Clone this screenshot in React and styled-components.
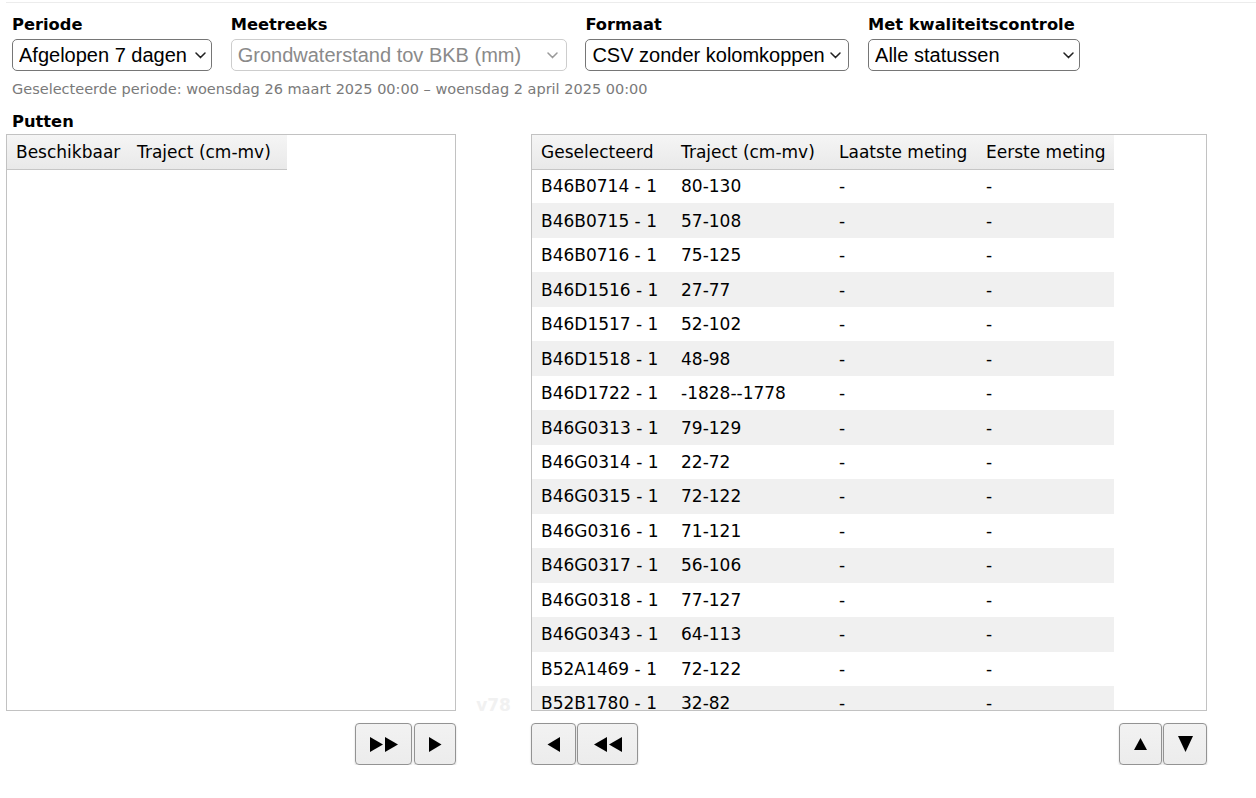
import React from "react";
import styled, { createGlobalStyle } from "styled-components";

const Global = createGlobalStyle`
  html, body { margin: 0; padding: 0; background: #fff; }
  body { font-family: "DejaVu Sans", Verdana, sans-serif; color: #000; }
`;

const Page = styled.div`
  padding: 2px 0 0 6px;
  width: 1208px;
`;

const TopRule = styled.div`
  width: 1250px;
  border-top: 1px solid #ececec;
`;

const Controls = styled.div`
  display: flex;
  gap: 18.7px;
  padding: 12px 0 0 6px;
`;

const Field = styled.div`
  display: flex;
  flex-direction: column;
  gap: 4px;
`;

const Label = styled.label`
  font-family: "DejaVu Sans", Verdana, sans-serif;
  font-weight: bold;
  font-size: 16.3px;
  line-height: 20px;
  white-space: nowrap;
`;

const SelectWrap = styled.div`
  position: relative;
  width: ${(p) => p.$w}px;
  height: 32px;
`;

const Select = styled.select`
  appearance: none;
  -webkit-appearance: none;
  box-sizing: border-box;
  width: 100%;
  height: 32px;
  margin: 0;
  padding: 0 24px 0 6px;
  border: 1px solid ${(p) => (p.disabled ? "#cdcdcd" : "#767676")};
  border-radius: 5px;
  background: #fff;
  color: ${(p) => (p.disabled ? "#8a8a8a" : "#000")};
  font-family: "Liberation Sans", Arial, sans-serif;
  font-size: 20px;
  line-height: 30px;
  opacity: 1;
`;

const Chevron = styled.svg`
  position: absolute;
  right: ${(p) => p.$r}px;
  top: 13px;
  width: 11px;
  height: 7px;
  pointer-events: none;
`;

const Period = styled.div`
  margin: 9px 0 0 6px;
  font-size: 14.5px;
  line-height: 18px;
  color: #7a7a7a;
  white-space: nowrap;
`;

const Section = styled.div`
  margin: 14px 0 2px 6px;
  font-weight: bold;
  font-size: 16.3px;
  line-height: 20px;
`;

const Grid = styled.div`
  display: grid;
  grid-template-columns: 450px 75px 676px;
`;

const Box = styled.div`
  box-sizing: border-box;
  height: 577px;
  border: 1px solid #c2c2c2;
  overflow-y: auto;
  scrollbar-width: none;
  &::-webkit-scrollbar { display: none; }
`;

const Version = styled.div`
  align-self: end;
  text-align: center;
  font-weight: bold;
  font-size: 17px;
  line-height: 15px;
  color: #f1f1f1;
  margin-bottom: -2px;
`;

const Table = styled.table`
  border-collapse: collapse;
  table-layout: fixed;
  width: ${(p) => p.$w}px;
  font-family: "DejaVu Sans", Verdana, sans-serif;
  font-size: 17px;
`;

const Th = styled.th`
  box-sizing: border-box;
  height: 34px;
  padding: 0 9px;
  text-align: left;
  font-weight: normal;
  white-space: nowrap;
  background: linear-gradient(#f5f5f5, #e9e9e9);
  border-bottom: 1px solid #c6c6c6;
`;

const Tr = styled.tr`
  height: 34.47px;
  background: ${(p) => (p.$odd ? "#f0f0f0" : "#fff")};
`;

const Td = styled.td`
  padding: 0 9px;
  white-space: nowrap;
  overflow: hidden;
`;

const ButtonRow = styled.div`
  display: flex;
  justify-content: ${(p) => p.$justify || "flex-start"};
  margin-top: 12px;
`;

const Group = styled.div`
  display: flex;
  gap: ${(p) => p.$gap}px;
`;

const Btn = styled.button`
  box-sizing: border-box;
  width: ${(p) => p.$w}px;
  height: 42px;
  margin: 0;
  padding: 0;
  display: flex;
  align-items: center;
  justify-content: center;
  border: 1px solid #939393;
  border-radius: 4px;
  background: linear-gradient(#f2f2f2, #ececec);
  box-shadow: 0 1px 2px rgba(0, 0, 0, 0.18);
`;

const Glyph = styled.svg`
  display: block;
`;

const ChevronIcon = ({ r, grey }) => (
  <Chevron $r={r} viewBox="0 0 11 7">
    <path d="M1 1 L5.5 5.6 L10 1" fill="none" stroke={grey ? "#9a9a9a" : "#222"} strokeWidth="1.5" strokeLinecap="round" strokeLinejoin="round" />
  </Chevron>
);

const Right2 = () => (
  <Glyph width="30" height="15" viewBox="0 0 30 15">
    <polygon points="1,0 14,7.5 1,15" fill="#000" />
    <polygon points="16,0 29,7.5 16,15" fill="#000" />
  </Glyph>
);
const Right1 = () => (
  <Glyph width="13" height="15" viewBox="0 0 13 15">
    <polygon points="0,0 12.5,7.5 0,15" fill="#000" />
  </Glyph>
);
const Left1 = () => (
  <Glyph width="13" height="15" viewBox="0 0 13 15">
    <polygon points="13,0 0.5,7.5 13,15" fill="#000" />
  </Glyph>
);
const Left2 = () => (
  <Glyph width="30" height="15" viewBox="0 0 30 15">
    <polygon points="14,0 1,7.5 14,15" fill="#000" />
    <polygon points="29,0 16,7.5 29,15" fill="#000" />
  </Glyph>
);
const Up = () => (
  <Glyph width="13" height="12" viewBox="0 0 13 12">
    <polygon points="6.5,0 13,12 0,12" fill="#000" />
  </Glyph>
);
const Down = () => (
  <Glyph width="15" height="16" viewBox="0 0 15 16">
    <polygon points="0,0 15,0 7.5,16" fill="#000" />
  </Glyph>
);

const rows = [
  ["B46B0714 - 1", "80-130"],
  ["B46B0715 - 1", "57-108"],
  ["B46B0716 - 1", "75-125"],
  ["B46D1516 - 1", "27-77"],
  ["B46D1517 - 1", "52-102"],
  ["B46D1518 - 1", "48-98"],
  ["B46D1722 - 1", "-1828--1778"],
  ["B46G0313 - 1", "79-129"],
  ["B46G0314 - 1", "22-72"],
  ["B46G0315 - 1", "72-122"],
  ["B46G0316 - 1", "71-121"],
  ["B46G0317 - 1", "56-106"],
  ["B46G0318 - 1", "77-127"],
  ["B46G0343 - 1", "64-113"],
  ["B52A1469 - 1", "72-122"],
  ["B52B1780 - 1", "32-82"],
];

const fields = [
  { label: "Periode", w: 200, value: "Afgelopen 7 dagen", r: 6 },
  { label: "Meetreeks", w: 336, value: "Grondwaterstand tov BKB (mm)", r: 9, disabled: true },
  { label: "Formaat", w: 264, value: "CSV zonder kolomkoppen", r: 8 },
  { label: "Met kwaliteitscontrole", w: 212, value: "Alle statussen", r: 6 },
];

export default function App() {
  return (
    <Page>
      <Global />
      <TopRule />
      <Controls>
        {fields.map((f) => (
          <Field key={f.label}>
            <Label>{f.label}</Label>
            <SelectWrap $w={f.w}>
              <Select disabled={f.disabled} defaultValue={f.value}>
                <option>{f.value}</option>
              </Select>
              <ChevronIcon r={f.r} grey={f.disabled} />
            </SelectWrap>
          </Field>
        ))}
      </Controls>
      <Period>Geselecteerde periode: woensdag 26 maart 2025 00:00 – woensdag 2 april 2025 00:00</Period>
      <Section>Putten</Section>
      <Grid>
        <Box>
          <Table $w={280}>
            <colgroup>
              <col style={{ width: 121 }} />
              <col style={{ width: 159 }} />
            </colgroup>
            <thead>
              <tr>
                <Th>Beschikbaar</Th>
                <Th>Traject (cm-mv)</Th>
              </tr>
            </thead>
          </Table>
        </Box>
        <Version>v78</Version>
        <Box>
          <Table $w={582}>
            <colgroup>
              <col style={{ width: 140 }} />
              <col style={{ width: 158 }} />
              <col style={{ width: 147 }} />
              <col style={{ width: 137 }} />
            </colgroup>
            <thead>
              <tr>
                <Th>Geselecteerd</Th>
                <Th>Traject (cm-mv)</Th>
                <Th>Laatste meting</Th>
                <Th>Eerste meting</Th>
              </tr>
            </thead>
            <tbody>
              {rows.map(([id, tr], i) => (
                <Tr key={id} $odd={i % 2 === 1}>
                  <Td>{id}</Td>
                  <Td>{tr}</Td>
                  <Td>-</Td>
                  <Td>-</Td>
                </Tr>
              ))}
            </tbody>
          </Table>
        </Box>

        <ButtonRow $justify="flex-end">
          <Group $gap={2}>
            <Btn $w={57}><Right2 /></Btn>
            <Btn $w={42}><Right1 /></Btn>
          </Group>
        </ButtonRow>
        <div />
        <ButtonRow $justify="space-between">
          <Group $gap={1}>
            <Btn $w={45}><Left1 /></Btn>
            <Btn $w={61}><Left2 /></Btn>
          </Group>
          <Group $gap={1}>
            <Btn $w={43}><Up /></Btn>
            <Btn $w={44}><Down /></Btn>
          </Group>
        </ButtonRow>
      </Grid>
    </Page>
  );
}
